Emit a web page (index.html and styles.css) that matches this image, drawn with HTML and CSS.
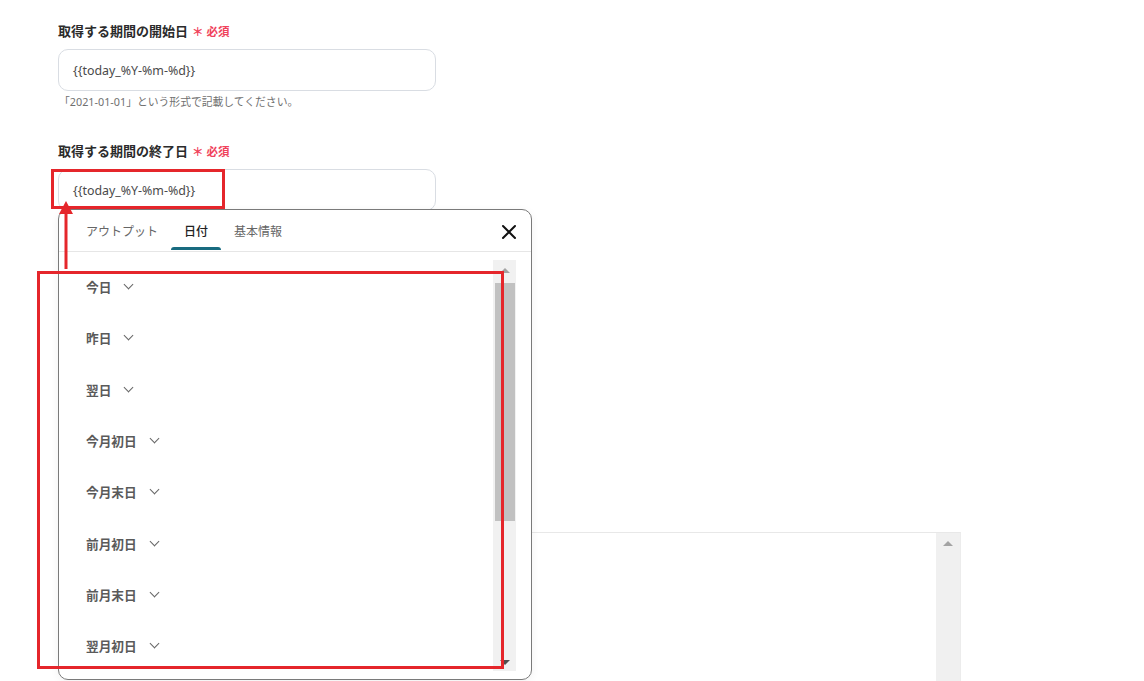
FILE: index.html
```html
<!DOCTYPE html>
<html lang="ja">
<head>
  <meta charset="UTF-8" />
  <meta name="viewport" content="width=device-width, initial-scale=1" />
  <title>期間の設定</title>
  <link rel="stylesheet" href="styles.css">
</head>
<body>

<div class="form">
  <!-- 開始日 -->
  <div class="field">
    <label class="field-label">取得する期間の開始日<span class="required">＊ 必須</span></label>
    <div class="text-input">{{today_%Y-%m-%d}}</div>
    <p class="hint">「2021-01-01」という形式で記載してください。</p>
  </div>

  <!-- 終了日 -->
  <div class="field field-end">
    <label class="field-label">取得する期間の終了日<span class="required">＊ 必須</span></label>
    <div class="text-input">{{today_%Y-%m-%d}}</div>
  </div>

  <!-- 下のテキストエリア -->
  <div class="textarea-box">
    <div class="fake-scroll">
      <span class="arrow-up light"></span>
    </div>
  </div>
</div>

<!-- 変数ポップアップ -->
<div class="picker">
  <div class="picker-tabs">
    <span class="tab">アウトプット</span>
    <span class="tab active">日付</span>
    <span class="tab">基本情報</span>
    <button class="picker-close" aria-label="閉じる">
      <svg width="16" height="16" viewBox="0 0 16 16"><path d="M2 2L14 14M14 2L2 14" stroke="#111" stroke-width="2" stroke-linecap="round"/></svg>
    </button>
  </div>
  <div class="picker-body">
    <ul class="date-list">
      <li>今日<i class="chev"></i></li>
      <li>昨日<i class="chev"></i></li>
      <li>翌日<i class="chev"></i></li>
      <li>今月初日<i class="chev"></i></li>
      <li>今月末日<i class="chev"></i></li>
      <li>前月初日<i class="chev"></i></li>
      <li>前月末日<i class="chev"></i></li>
      <li>翌月初日<i class="chev"></i></li>
    </ul>
    <div class="picker-scroll">
      <span class="arrow-up"></span>
      <div class="thumb"></div>
      <span class="arrow-down"></span>
    </div>
  </div>
</div>

<!-- 注釈 -->
<div class="mark mark-input"></div>
<div class="mark mark-list"></div>
<svg class="mark-arrow" width="20" height="70" viewBox="0 0 20 70">
  <path d="M10 68V12" stroke="#e5262b" stroke-width="3"/>
  <path d="M10 0L17 13H3Z" fill="#e5262b"/>
</svg>

</body>
</html>
```

FILE: styles.css
```css
* {
  box-sizing: border-box;
}

html, body {
  height: 100%;
}

body {
  margin: 0;
  background: #fff;
  font-family: "Noto Sans", "Noto Sans CJK JP", sans-serif;
  color: #333;
  overflow: hidden;
}

.form {
  padding: 22px 0 0 58px;
}

.field {
  width: 378px;
}

.field-end {
  margin-top: 32px;
}

.field-label {
  display: block;
  font-size: 13px;
  line-height: 18px;
  font-weight: 700;
  color: #2b2b2b;
}

.required {
  color: #f0435c;
  font-size: 11.5px;
  margin-left: 4px;
}

.text-input {
  margin-top: 8px;
  height: 42px;
  border: 1px solid #d9dde3;
  border-radius: 10px;
  padding: 0 14px;
  display: flex;
  align-items: center;
  font-size: 12.4px;
  color: #4a4a4a;
}

.hint {
  margin: 3px 0 0 1px;
  font-size: 10.8px;
  line-height: 16px;
  color: #707070;
}

/* テキストエリア */
.textarea-box {
  margin-top: 321px;
  width: 903px;
  height: 151px;
  border-top: 1px solid #e8e8e8;
  border-right: 1px solid #ececec;
  display: flex;
  justify-content: flex-end;
}

.fake-scroll {
  width: 24px;
  background: #f0f0f0;
  display: flex;
  justify-content: center;
  padding-top: 8px;
}

.arrow-up,
.arrow-down {
  display: block;
  width: 0;
  height: 0;
  border-left: 5px solid transparent;
  border-right: 5px solid transparent;
}

.arrow-up {
  border-bottom: 5px solid #a3a3a3;
}

.arrow-down {
  border-top: 5px solid #505050;
}

/* ポップアップ */
.picker {
  position: absolute;
  left: 58px;
  top: 209px;
  width: 474px;
  height: 471px;
  background: #fff;
  border: 1px solid #7a7a7a;
  border-radius: 10px;
  box-shadow: 0 2px 8px rgba(0, 0, 0, 0.06);
  display: flex;
  flex-direction: column;
}

.picker-tabs {
  height: 42px;
  flex-shrink: 0;
  display: flex;
  align-items: stretch;
  padding-left: 14px;
  border-bottom: 1px solid #e6e6e6;
  position: relative;
}

.tab {
  padding: 0 13px;
  display: flex;
  align-items: center;
  font-size: 12px;
  color: #666;
  position: relative;
}

.tab.active {
  color: #222;
  font-weight: 500;
}

.tab.active::after {
  content: "";
  position: absolute;
  left: 0;
  right: 0;
  bottom: 1px;
  height: 3px;
  background: #186b80;
  border-radius: 3px 3px 0 0;
}

.picker-close {
  position: absolute;
  right: 14px;
  top: 14px;
  border: none;
  background: none;
  padding: 0;
  width: 16px;
  height: 16px;
  cursor: pointer;
}

.picker-body {
  flex: 1;
  display: flex;
  padding: 8px 15px 10px 0;
}

.date-list {
  flex: 1;
  list-style: none;
  margin: 0;
  padding: 0 0 0 27px;
}

.date-list li {
  height: 51.3px;
  display: flex;
  align-items: center;
  font-size: 12.7px;
  font-weight: 600;
  color: #5a5a5a;
}

.date-list li:first-child {
  margin-top: 1px;
}

.chev {
  width: 7px;
  height: 7px;
  margin-left: 14px;
  margin-top: -4px;
  border-right: 1.8px solid #666;
  border-bottom: 1.8px solid #666;
  transform: rotate(45deg);
}

.picker-scroll {
  width: 23px;
  background: #f1f1f1;
  display: flex;
  flex-direction: column;
  align-items: center;
  padding: 8px 0 6px;
}

.picker-scroll .thumb {
  width: 20px;
  height: 238px;
  margin-top: 10px;
  background: #c1c1c1;
}

.picker-scroll .arrow-down {
  margin-top: auto;
}

/* 注釈 */
.mark {
  position: absolute;
  border: 3px solid #e5262b;
}

.mark-input {
  left: 51px;
  top: 169px;
  width: 174px;
  height: 40px;
}

.mark-list {
  left: 37px;
  top: 271px;
  width: 467px;
  height: 398px;
}

.mark-arrow {
  position: absolute;
  left: 56px;
  top: 201px;
}
```
